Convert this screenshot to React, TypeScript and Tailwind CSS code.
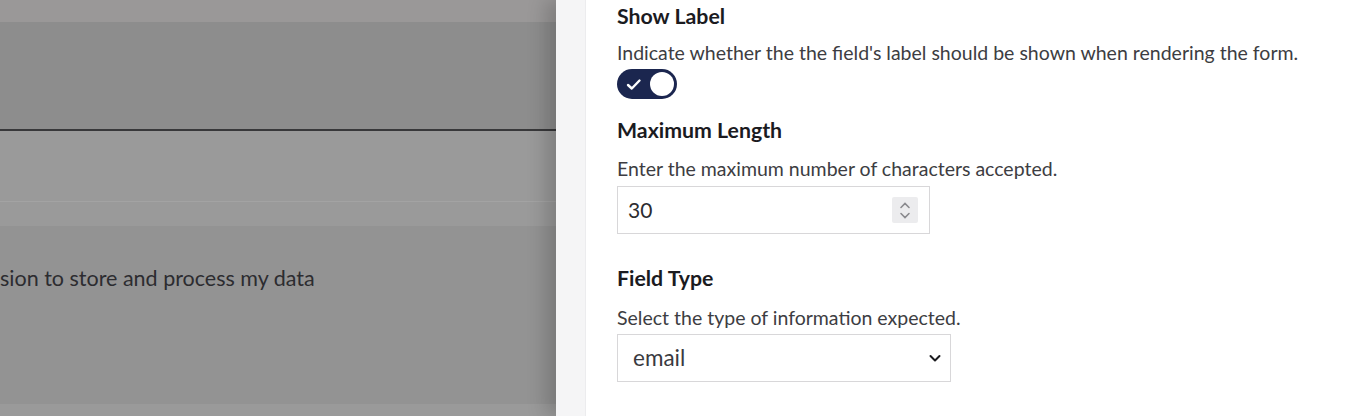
import React from 'react';

const Heading = ({ children }: { children: React.ReactNode }) => (
  <h3 className="text-[21.3px] font-bold leading-[28px] text-[#1b1b1f]">{children}</h3>
);

const Description = ({ children }: { children: React.ReactNode }) => (
  <p className="whitespace-nowrap text-[19.5px] leading-[24px] text-[#3d3d42]">{children}</p>
);

export default function App() {
  return (
    <div className="flex h-[416px] w-[1360px] overflow-hidden font-['Lato','Noto_Sans',sans-serif]">
      {/* dimmed page behind the dialog */}
      <div className="flex w-[556px] shrink-0 flex-col bg-[#9a9a9a]">
        <div className="h-[22px] bg-[#9a9898]" />
        <div className="h-[109px] border-b-2 border-[#38383a] bg-[#8d8d8d]" />
        <div className="h-[71px] border-b border-[#a3a3a3] bg-[#9a9a9a]" />
        <div className="h-[24px] bg-[#9a9a9a]" />
        <div className="h-[178px] bg-[#939393] pt-[39px]">
          <span className="whitespace-nowrap text-[21.5px] leading-[26px] text-[#2c2c30]">sion to store and process my data</span>
        </div>
        <div className="flex-1 bg-[#9a9a9a]" />
      </div>

      {/* settings panel */}
      <div className="relative flex flex-1 bg-white shadow-[-10px_0_18px_rgba(0,0,0,0.18)]">
        <div className="w-[30px] shrink-0 border-r border-[#ececee] bg-[#f5f5f6]" />
        <div className="flex flex-col pl-[31px] pt-[2px]">
          <Heading>Show Label</Heading>
          <div className="mt-[11px]">
            <Description>Indicate whether the the field's label should be shown when rendering the form.</Description>
          </div>
          <div className="mt-[4px] flex h-[30px] w-[60px] items-center justify-between rounded-full bg-[#1b264f] pl-[9px] pr-[3px]">
            <svg width="16" height="13" viewBox="0 0 16 13" fill="none">
              <path d="M2 7l3.8 3.5L13.5 2.5" stroke="white" strokeWidth="2.4" strokeLinecap="round" strokeLinejoin="round" />
            </svg>
            <div className="h-[24px] w-[24px] rounded-full bg-white" />
          </div>

          <div className="mt-[17px]">
            <Heading>Maximum Length</Heading>
          </div>
          <div className="mt-[13px]">
            <Description>Enter the maximum number of characters accepted.</Description>
          </div>
          <div className="mt-[5px] flex h-[48px] w-[313px] items-center justify-between border border-[#d8d7d9] pl-[10px] pr-[11px]">
            <span className="text-[21px] text-[#2c2c30]">30</span>
            <div className="flex h-[26px] w-[26px] flex-col items-center justify-center gap-[3px] rounded-[2px] bg-[#ececee]">
              <svg width="12" height="7" viewBox="0 0 12 7" fill="none">
                <path d="M2 5.5L6 1.5 10 5.5" stroke="#8a8a8e" strokeWidth="1.6" strokeLinecap="round" />
              </svg>
              <svg width="12" height="7" viewBox="0 0 12 7" fill="none">
                <path d="M2 1.5L6 5.5 10 1.5" stroke="#8a8a8e" strokeWidth="1.6" strokeLinecap="round" />
              </svg>
            </div>
          </div>

          <div className="mt-[30px]">
            <Heading>Field Type</Heading>
          </div>
          <div className="mt-[14px]">
            <Description>Select the type of information expected.</Description>
          </div>
          <div className="mt-[4px] flex h-[48px] w-[334px] items-center justify-between border border-[#d8d7d9] pl-[15px] pr-[7px]">
            <span className="text-[22.5px] text-[#3a3a3f]">email</span>
            <svg width="16" height="16" viewBox="0 0 16 16" fill="none">
              <path d="M3.5 6l4.5 4.5L12.5 6" stroke="#1b1b1f" strokeWidth="2" strokeLinecap="round" strokeLinejoin="round" />
            </svg>
          </div>
        </div>
      </div>
    </div>
  );
}
